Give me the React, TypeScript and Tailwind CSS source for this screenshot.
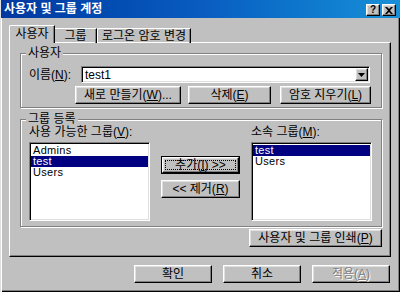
import React from "react";

const raised =
  "border border-t-white border-l-white border-r-black border-b-black shadow-[inset_-1px_-1px_0_#808080,inset_1px_1px_0_#dfdfdf] bg-[#c0c0c0]";
const sunken =
  "border border-t-[#808080] border-l-[#808080] border-r-white border-b-white shadow-[inset_1px_1px_0_#000,inset_-1px_-1px_0_#dfdfdf] bg-white";

function Btn({
  w,
  children,
  disabled,
  def,
}: {
  w: string;
  children: React.ReactNode;
  disabled?: boolean;
  def?: boolean;
}) {
  if (def) {
    return (
      <div className={`${w} h-[18px] border border-black flex`}>
        <div className={`${raised} flex-1 flex items-center justify-center p-[2px]`}>
          <div className="flex-1 self-stretch border border-dotted border-black flex items-center justify-center text-[12px] leading-none">
            {children}
          </div>
        </div>
      </div>
    );
  }
  return (
    <div
      className={`${w} h-[18px] ${raised} flex items-center justify-center text-[12px] leading-none ${
        disabled ? "text-[#808080] [text-shadow:1px_1px_0_#fff]" : "text-black"
      }`}
    >
      {children}
    </div>
  );
}

function GroupBox({
  title,
  className,
  children,
}: {
  title: string;
  className: string;
  children: React.ReactNode;
}) {
  return (
    <div
      className={`relative border border-[#808080] shadow-[inset_1px_1px_0_#fff,1px_1px_0_#fff] ${className}`}
    >
      <div className="absolute left-[5px] -top-[7px] px-[2px] bg-[#c0c0c0] text-[12px] leading-[12px]">
        {title}
      </div>
      {children}
    </div>
  );
}

function ListBox({ items, sel }: { items: string[]; sel: number }) {
  return (
    <div className={`w-[121px] h-[79px] ${sunken} p-[1px]`}>
      <div className="pt-[1px]">
        {items.map((it, i) => (
          <div
            key={it}
            className={`h-[11px] pl-[2px] text-[11px] leading-[11px] tracking-[0.3px] ${
              i === sel ? "bg-[#000080] text-white" : "text-black"
            }`}
          >
            {it}
          </div>
        ))}
      </div>
    </div>
  );
}

export default function App() {
  return (
    <div className="w-[400px] h-[292px] bg-[#c0c0c0] flex flex-col relative shadow-[inset_1px_0_0_#dfdfdf,inset_2px_0_0_#fff,inset_-1px_-1px_0_#000,inset_-2px_-2px_0_#808080] text-black font-['Liberation_Sans','Noto_Sans_CJK_KR',sans-serif] overflow-hidden">
      {/* Title bar */}
      <div className="h-[18px] ml-[1px] flex items-start bg-gradient-to-r from-[#0038a0] via-[#0a5cc0] to-[#1890d8]">
        <div className="pl-[3px] pt-[2px] text-white text-[12px] leading-[14px] font-bold flex-1">
          사용자 및 그룹 계정
        </div>
        <div className="flex gap-[2px] pt-[4px] pr-[4px]">
          <div className={`w-[14px] h-[12px] ${raised} flex items-center justify-center text-[10px] leading-none font-bold`}>
            ?
          </div>
          <div className={`w-[14px] h-[12px] ${raised} flex items-center justify-center`}>
            <svg width="8" height="7" viewBox="0 0 8 7">
              <path d="M0 0h2l2 2 2-2h2L5 3.5 8 7H6L4 5 2 7H0l3-3.5z" fill="#000" />
            </svg>
          </div>
        </div>
      </div>

      {/* Tabs */}
      <div className="mt-[7px] ml-[9px] h-[18px] flex items-end relative z-10 -mb-[1px] text-[12px]">
        <div className="w-[46px] h-[18px] border-t border-l border-t-white border-l-white border-r border-r-black shadow-[inset_-1px_0_0_#808080] bg-[#c0c0c0] rounded-tl-[2px] flex justify-center pt-[2px] leading-[12px]">
          사용자
        </div>
        <div className="w-[42px] h-[15px] border-t border-t-white border-r border-r-black shadow-[inset_-1px_0_0_#808080] flex justify-center pt-[1px] leading-[12px]">
          그룹
        </div>
        <div className="w-[94px] h-[15px] border-t border-l border-t-white border-l-white border-r border-r-black shadow-[inset_-1px_0_0_#808080] rounded-tl-[2px] flex justify-center pt-[1px] leading-[12px]">
          로그온 암호 변경
        </div>
      </div>

      {/* Panel */}
      <div className="ml-[9px] w-[382px] h-[215px] border border-t-white border-l-white border-r-black border-b-black shadow-[inset_-1px_-1px_0_#808080] flex flex-col pl-[10px] pt-[10px]">
        <GroupBox title="사용자" className="w-[362px] h-[55px]">
          <div className="flex items-center mt-[12px] pl-[8px]">
            <div className="w-[52px] text-[12px] leading-[12px]">
              이름(<u>N</u>):
            </div>
            <div className={`w-[289px] h-[17px] ${sunken} flex items-center pl-[3px] relative`}>
              <span className="text-[12px] leading-[12px] flex-1">test1</span>
              <div className={`w-[13px] h-[13px] ${raised} flex items-center justify-center mr-[1px]`}>
                <svg width="7" height="4" viewBox="0 0 7 4">
                  <path d="M0 0h7L3.5 4z" fill="#000" />
                </svg>
              </div>
            </div>
          </div>
          <div className="flex mt-[3px] ml-[54px]">
            <Btn w="w-[106px]">
              새로 만들기(<u>W</u>)...
            </Btn>
            <div className="w-[7px]" />
            <Btn w="w-[83px]">
              삭제(<u>E</u>)
            </Btn>
            <div className="w-[9px]" />
            <Btn w="w-[91px]">
              암호 지우기(<u>L</u>)
            </Btn>
          </div>
        </GroupBox>

        <GroupBox title="그룹 등록" className="w-[362px] h-[108px] mt-[11px]">
          <div className="flex pl-[8px] pt-[6px] items-start">
            <div className="flex flex-col">
              <div className="text-[12px] leading-[12px] h-[12px]">
                사용 가능한 그룹(<u>V</u>):
              </div>
              <div className="mt-[4px]">
                <ListBox items={["Admins", "test", "Users"]} sel={1} />
              </div>
            </div>
            <div className="flex flex-col ml-[11px] mt-[30px] gap-[6px]">
              <Btn w="w-[79px]" def>
                추가(<u>I</u>) &gt;&gt;
              </Btn>
              <Btn w="w-[79px]">
                &lt;&lt; 제거(<u>R</u>)
              </Btn>
            </div>
            <div className="flex flex-col ml-[11px]">
              <div className="text-[12px] leading-[12px] h-[12px]">
                소속 그룹(<u>M</u>):
              </div>
              <div className="mt-[4px]">
                <ListBox items={["test", "Users"]} sel={0} />
              </div>
            </div>
          </div>
        </GroupBox>

        <div className="mt-[2px] ml-[229px]">
          <Btn w="w-[133px]">
            사용자 및 그룹 인쇄(<u>P</u>)
          </Btn>
        </div>
      </div>

      {/* Bottom buttons */}
      <div className="flex mt-[8px] ml-[134px] gap-[11px]">
        <Btn w="w-[78px]">확인</Btn>
        <Btn w="w-[78px]">취소</Btn>
        <Btn w="w-[78px]" disabled>
          적용(<u>A</u>)
        </Btn>
      </div>
    </div>
  );
}
